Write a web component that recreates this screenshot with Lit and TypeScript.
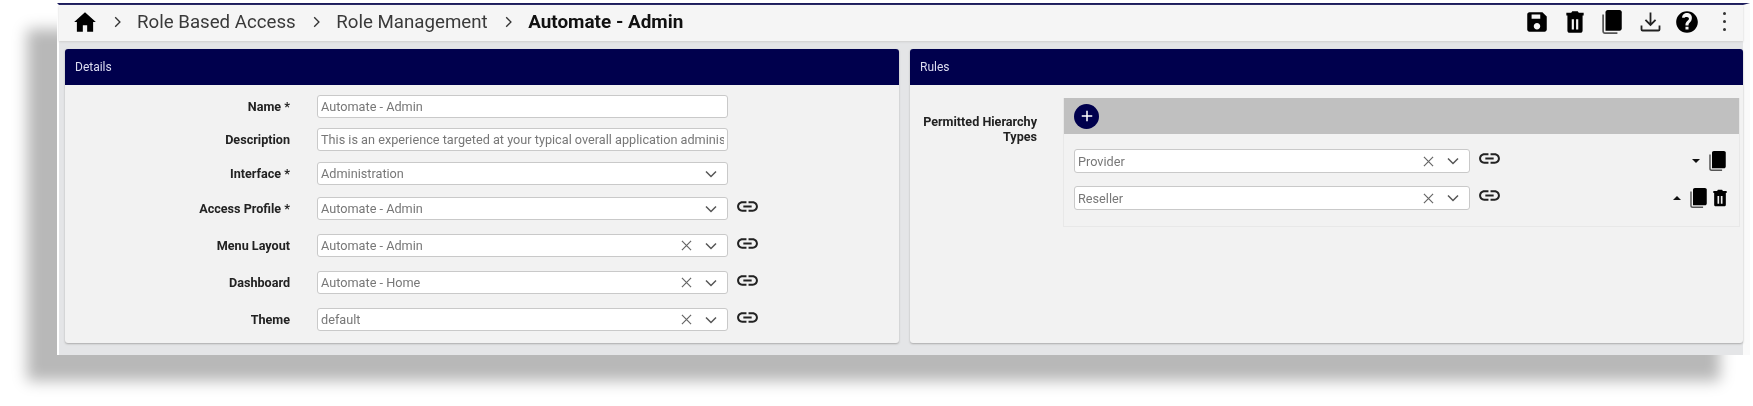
import { LitElement, html, css, svg } from "lit";
import { customElement } from "lit/decorators.js";

const icon = (d: string, cls: string) => html`<svg class=${cls} viewBox="0 0 24 24" aria-hidden="true"><path d=${d} fill-rule="evenodd"></path></svg>`;
const P = {
  home: "M10 21v-6h4v6h5.500v-9H22L12 3 2 12h2.500v9z",
  chevron: "M8.600 5.600 10 4.200 17.800 12 10 19.800 8.600 18.400 15 12z",
  save: "M17 3H5c-1.110 0-2 .9-2 2v14c0 1.100.89 2 2 2h14c1.100 0 2-.9 2-2V7l-4-4zm-5 16c-1.660 0-3-1.340-3-3s1.340-3 3-3 3 1.340 3 3-1.340 3-3 3zm3-10H7V5h8v4z",
  trash: "M5 6h14v14c0 1.100-.9 2-2 2H7c-1.100 0-2-.9-2-2V6zm4 3.500v9.500h2V9.500H9zm4 0v9.500h2V9.500h-2zM20 3.500h-4.500l-1-1.500h-5l-1 1.500H4V6h16V3.500z",
  help: "M12 2C6.480 2 2 6.480 2 12s4.480 10 10 10 10-4.480 10-10S17.520 2 12 2zm1.400 17h-2.800v-2.600h2.800V19zm2.200-7.600-1 1c-.9.9-1.200 1.500-1.200 2.800h-2.800v-.6c0-1.200.5-2.200 1.200-3l1.400-1.400c.4-.4.6-.8.6-1.300 0-.9-.8-1.600-1.800-1.600S10 7.100 10 8H7.500c0-2.400 2-4.200 4.500-4.200s4.500 1.800 4.500 4.200c0 1.300-.5 2.500-.9 3.400z",
  link: "M3.900 12c0-1.710 1.390-3.100 3.100-3.100h4V7H7c-2.760 0-5 2.240-5 5s2.240 5 5 5h4v-1.900H7c-1.710 0-3.100-1.390-3.100-3.100zM8 13h8v-2H8v2zm9-6h-4v1.900h4c1.710 0 3.100 1.390 3.100 3.100s-1.390 3.100-3.100 3.100h-4V17h4c2.760 0 5-2.240 5-5s-2.240-5-5-5z",
  plus: "M11 5h2v6h6v2h-6v6h-2v-6H5v-2h6z",
};
const book = (cls: string) => html`<svg class=${cls} viewBox="0 0 20 24" aria-hidden="true">
  ${svg`<path d="M1 5h1.600v15.500c0 .5.4.9.9.9H15V23H3.500C2.100 23 1 21.900 1 20.500z" fill="#555"></path>
  <path d="M6 1h11c1.100 0 2 .9 2 2v15c0 1.100-.9 2-2 2H4V3c0-1.100.9-2 2-2z"></path>`}
</svg>`;
const download = html`<svg class="a-down" viewBox="0 0 24 24" aria-hidden="true">
  ${svg`<path d="M12 4v11M7.500 10.500 12 15l4.500-4.500M4 15.500V19c0 .6.4 1 1 1h14c.6 0 1-.4 1-1v-3.500" fill="none" stroke="#222" stroke-width="1.600"></path>`}
</svg>`;
const chevDown = html`<svg class="chev" viewBox="0 0 12 8" aria-hidden="true"><path d="M1 1.500 6 6.500 11 1.500" fill="none" stroke="#555" stroke-width="1.500"></path></svg>`;
const clear = html`<svg class="clear" viewBox="0 0 12 12" aria-hidden="true"><path d="M1 1 11 11M11 1 1 11" fill="none" stroke="#666" stroke-width="1.300"></path></svg>`;

type Row = { label: string; value: string; cls: string; select?: boolean; clearable?: boolean; link?: boolean };
const rows: Row[] = [
  { label: "Name *", value: "Automate - Admin", cls: "r33" },
  { label: "Description", value: "This is an experience targeted at your typical overall application administrator", cls: "r34" },
  { label: "Interface *", value: "Administration", cls: "r35", select: true },
  { label: "Access Profile *", value: "Automate - Admin", cls: "r37", select: true, link: true },
  { label: "Menu Layout", value: "Automate - Admin", cls: "r37", select: true, clearable: true, link: true },
  { label: "Dashboard", value: "Automate - Home", cls: "r37", select: true, clearable: true, link: true },
  { label: "Theme", value: "default", cls: "r37", select: true, clearable: true, link: true },
];

@customElement("app-root")
export class AppRoot extends LitElement {
  static styles = css`
    :host { display: block; height: 406px; overflow: hidden; background: #fff; font-family: Roboto, "Liberation Sans", sans-serif; padding: 3px 3px 0 57px; box-sizing: border-box; }
    .window { height: 352px; box-sizing: border-box; background: #e4e5e7; border-top: 2px solid #1c1c5c; border-left: 2px solid #fff; border-right: 7px solid #fafafa; box-shadow: -30px 26px 14px #b8b8b8; display: flex; flex-direction: column; filter: blur(0.35px); }
    .toolbar { height: 36px; box-sizing: border-box; padding: 0 0 3px 13px; flex: none; background: #f5f5f5; box-shadow: 0 1px 2px #cfcfcf; display: flex; align-items: center; color: #3a3a3a; font-size: 18.700px; }
    .toolbar svg { fill: #000; display: block; flex: none; }
    .home { width: 26px; height: 26px; margin-right: 11px; }
    .sep { width: 16px; height: 16px; fill: #333 !important; margin-right: 12px; }
    .crumb { margin-right: 12.500px; }
    .current { font-weight: 700; color: #111; font-size: 18.900px; }
    .actions { margin-left: auto; display: flex; align-items: center; }
    .a-save { width: 26px; height: 26px; margin-right: 12px; }
    .a-trash { width: 26px; height: 26px; margin-right: 13px; }
    .a-book { width: 22px; height: 26px; margin-right: 14px; }
    .a-down { width: 27px; height: 27px; margin-right: 10px; }
    .a-help { width: 26px; height: 26px; margin-right: 23px; }
    .dots { display: flex; flex-direction: column; gap: 5px; margin-right: 17px; }
    .dots i { width: 3px; height: 3px; border-radius: 50%; background: #333; display: block; }
    .panels { flex: 1; display: grid; grid-template-columns: 834px 833px; grid-template-rows: minmax(0, 1fr); column-gap: 11px; padding: 8px 0 12px 6px; min-height: 0; }
    .panel { background: #f2f2f2; border-radius: 3px; box-shadow: 0 1px 2px #aaa; display: flex; flex-direction: column; min-height: 0; }
    .head { height: 36px; flex: none; background: #00004d; color: #dcdcf0; font-size: 12px; display: flex; align-items: center; padding-left: 10px; border-radius: 3px 3px 0 0; }
    .form { padding-top: 10px; }
    .row { display: flex; align-items: flex-start; }
    .r33 { height: 33px; } .r34 { height: 34px; } .r35 { height: 35px; } .r37 { height: 37px; }
    .r37:last-child { height: 23px; }
    .label { width: 225px; flex: none; text-align: right; font-size: 12.600px; font-weight: 700; color: #222; line-height: 23px; margin-right: 27px; }
    .field { box-sizing: border-box; background: #fff; border: 1px solid #c9c9c9; border-radius: 3px; height: 23px; display: flex; align-items: center; padding: 0 3px; font-size: 12.700px; color: #777; overflow: hidden; }
    .form .field { width: 411px; }
    .value { flex: 1; min-width: 0; white-space: nowrap; overflow: hidden; }
    .clear { width: 11px; height: 11px; margin-right: 13px; flex: none; }
    .chev { width: 12px; height: 8px; margin-right: 7px; flex: none; }
    .linkbtn { width: 25px; height: 25px; fill: #222; margin-left: 7px; margin-top: -3px; flex: none; }
    .rules { display: flex; align-items: flex-start; padding-top: 13px; }
    .rules-label { width: 127px; flex: none; text-align: right; font-size: 12.600px; font-weight: 700; color: #222; line-height: 15px; margin-top: 16px; margin-right: 26px; }
    .group { width: 677px; border: 1px solid #e8e8e8; border-top: 0; box-sizing: border-box; height: 129px; }
    .bar { height: 36px; background: #c0c0c0; display: flex; align-items: center; padding-left: 10px; }
    .add { width: 25px; height: 25px; border-radius: 50%; background: #00004d; display: flex; align-items: center; justify-content: center; }
    .add svg { width: 18px; height: 18px; fill: #fff; }
    .rule-rows { padding: 15px 0 0 10px; display: flex; flex-direction: column; gap: 13px; }
    .rule { display: flex; align-items: flex-start; height: 24px; }
    .rule .field { width: 396px; height: 24px; }
    .tools { margin-left: auto; display: flex; align-items: center; height: 24px; padding-right: 12px; }
    .tools svg { display: block; flex: none; fill: #000; }
    .caret { width: 0; height: 0; border-left: 4.500px solid transparent; border-right: 4.500px solid transparent; margin-right: 8px; }
    .caret.down { border-top: 4.500px solid #111; }
    .caret.up { border-bottom: 4.500px solid #111; }
    .t-book { width: 19px; height: 22px; }
    .t-trash { width: 20px; height: 20px; margin: 0 -3px 0 2px; }
  `;

  private field(r: { value: string; select?: boolean; clearable?: boolean }) {
    return html`<div class="field"><span class="value">${r.value}</span>${r.clearable ? clear : ""}${r.select ? chevDown : ""}</div>`;
  }

  render() {
    return html`
      <div class="window">
        <header class="toolbar">
          ${icon(P.home, "home")}
          ${icon(P.chevron, "sep")}<span class="crumb">Role Based Access</span>
          ${icon(P.chevron, "sep")}<span class="crumb">Role Management</span>
          ${icon(P.chevron, "sep")}<span class="current">Automate - Admin</span>
          <div class="actions">
            ${icon(P.save, "a-save")}
            ${icon(P.trash, "a-trash")}
            ${book("a-book")}
            ${download}
            ${icon(P.help, "a-help")}
            <div class="dots"><i></i><i></i><i></i></div>
          </div>
        </header>
        <div class="panels">
          <section class="panel">
            <div class="head">Details</div>
            <div class="form">
              ${rows.map((r) => html`<div class="row ${r.cls}">
                <div class="label">${r.label}</div>
                ${this.field(r)}
                ${r.link ? icon(P.link, "linkbtn") : ""}
              </div>`)}
            </div>
          </section>
          <section class="panel">
            <div class="head">Rules</div>
            <div class="rules">
              <div class="rules-label">Permitted Hierarchy Types</div>
              <div class="group">
                <div class="bar"><div class="add">${icon(P.plus, "")}</div></div>
                <div class="rule-rows">
                  <div class="rule">
                    ${this.field({ value: "Provider", select: true, clearable: true })}
                    ${icon(P.link, "linkbtn")}
                    <div class="tools"><span class="caret down"></span>${book("t-book")}</div>
                  </div>
                  <div class="rule">
                    ${this.field({ value: "Reseller", select: true, clearable: true })}
                    ${icon(P.link, "linkbtn")}
                    <div class="tools"><span class="caret up"></span>${book("t-book")}${icon(P.trash, "t-trash")}</div>
                  </div>
                </div>
              </div>
            </div>
          </section>
        </div>
      </div>
    `;
  }
}
